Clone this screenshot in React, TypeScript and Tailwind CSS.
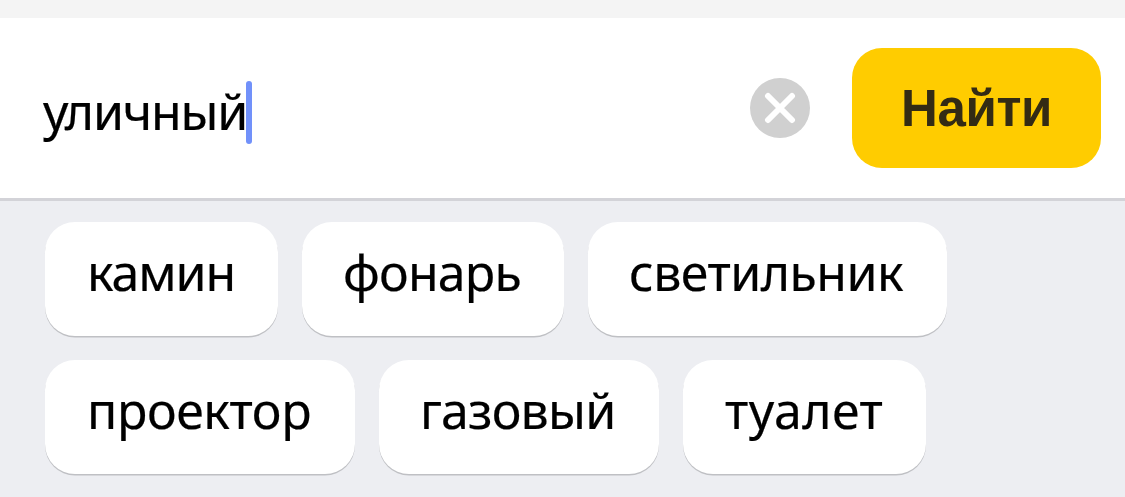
const suggestionRows = [
  [
    { text: 'камин', className: 'w-[233px] pl-[42px] tracking-[-1.1px]' },
    { text: 'фонарь', className: 'w-[262px] pl-[41px] tracking-[-0.8px]' },
    { text: 'светильник', className: 'w-[359px] pl-[41px] tracking-[-0.5px]' },
  ],
  [
    { text: 'проектор', className: 'w-[310px] pl-[42px] tracking-[-0.4px]' },
    { text: 'газовый', className: 'w-[280px] pl-[41px] tracking-[-0.8px]' },
    { text: 'туалет', className: 'w-[243px] pl-[42px] tracking-[0.4px]' },
  ],
]

const SearchBar = () => {
  return (
    <form className="flex h-[183px] items-start border-b-3 border-[#d3d3d8] bg-white pt-[30px] pr-6 pl-[43px]">
      <div className="flex h-[120px] flex-1 items-center pt-1">
        <span className="w-[203px] pt-px text-[50px] leading-[60px] tracking-[-1.2px] whitespace-nowrap text-black [-webkit-text-stroke:0.2px_black]">
          уличный
        </span>
        <span className="mt-1 h-[63px] w-[6px] rounded-full bg-[#7191fa]"></span>
      </div>
      <button
        type="button"
        aria-label="Очистить"
        className="mt-[30px] mr-[42px] flex size-[60px] items-center justify-center rounded-full bg-[#d0d0d0]"
      >
        <svg width="32" height="32" viewBox="0 0 32 32" fill="none" stroke="white" strokeWidth="6" strokeLinecap="round">
          <path d="M4 4 28 28M28 4 4 28" />
        </svg>
      </button>
      <button
        type="button"
        className="h-[120px] w-[249px] rounded-[30px] bg-[#ffcc00] pt-0.5 font-['Liberation_Sans',sans-serif] text-[51px] font-bold tracking-[-0.4px] text-[#332b14]"
      >
        Найти
      </button>
    </form>
  )
}

const Suggestions = () => {
  return (
    <section className="flex flex-1 flex-col gap-6 bg-[#edeef2] pt-[21px] pl-[45px]">
      {suggestionRows.map((row, index) => (
        <div key={index} className="flex gap-6">
          {row.map((item) => (
            <button
              key={item.text}
              type="button"
              className={`${item.className} h-[114px] rounded-[30px] bg-white pb-[14px] text-left text-[50px] whitespace-nowrap text-black shadow-[0_1.5px_0_#bfc0c4] [-webkit-text-stroke:0.2px_black]`}
            >
              {item.text}
            </button>
          ))}
        </div>
      ))}
    </section>
  )
}

const App = () => {
  return (
    <main className="flex h-[497px] w-[1125px] flex-col overflow-hidden bg-[#f4f4f4] pt-[18px] font-['Noto_Sans',sans-serif]">
      <SearchBar />
      <Suggestions />
    </main>
  )
}

export default App
